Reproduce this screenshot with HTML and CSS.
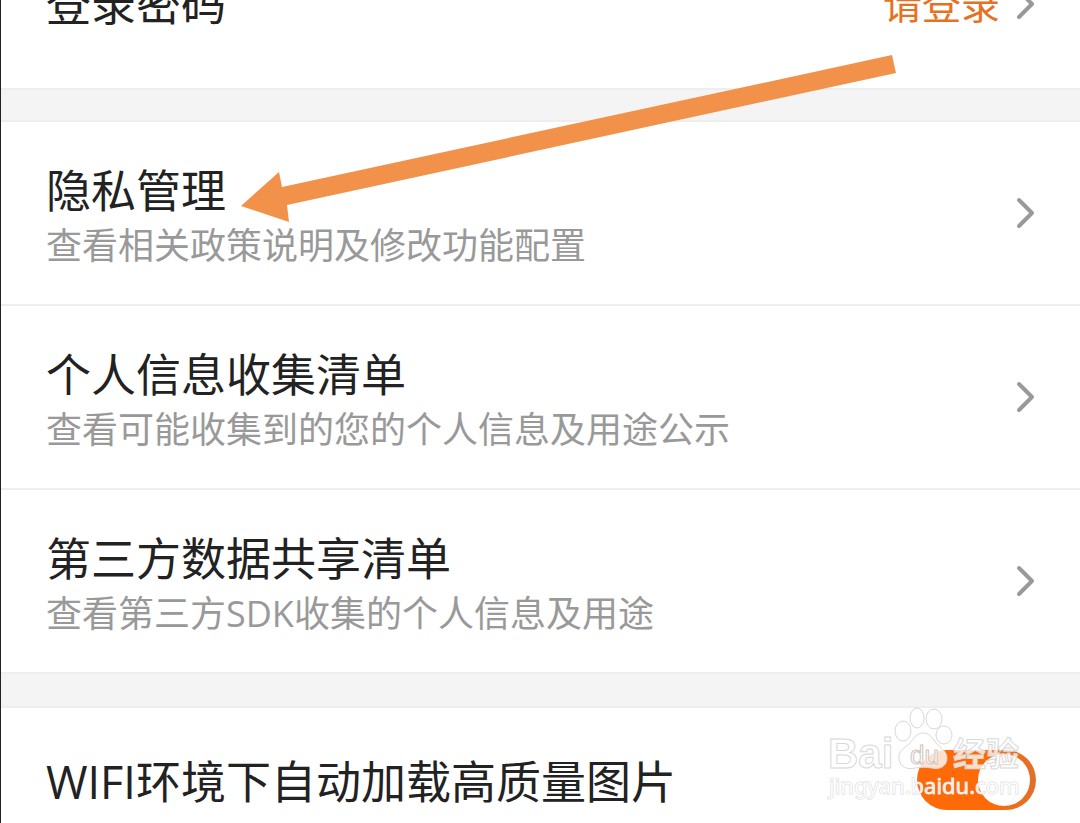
FILE: index.html
```html
<!DOCTYPE html>
<html lang="zh-CN">
<head>
<meta charset="utf-8">
<meta name="viewport" content="width=device-width, initial-scale=1">
<title>设置</title>
<link rel="stylesheet" href="styles.css">
</head>
<body>
<main class="settings">
  <section class="group group-first">
    <a class="row row-password" href="#password">
      <span class="title">登录密码</span>
      <span class="value">请登录</span>
      <svg class="chevron" viewBox="0 0 20 32" aria-hidden="true"><path d="M3 3 L16 16 L3 29"/></svg>
    </a>
  </section>
  <section class="group">
    <a class="row" href="#privacy">
      <span class="label"><span class="title">隐私管理</span><span class="note">查看相关政策说明及修改功能配置</span></span>
      <svg class="chevron" viewBox="0 0 20 32" aria-hidden="true"><path d="M3 3 L16 16 L3 29"/></svg>
    </a>
    <a class="row" href="#collection">
      <span class="label"><span class="title">个人信息收集清单</span><span class="note">查看可能收集到的您的个人信息及用途公示</span></span>
      <svg class="chevron" viewBox="0 0 20 32" aria-hidden="true"><path d="M3 3 L16 16 L3 29"/></svg>
    </a>
    <a class="row" href="#sharing">
      <span class="label"><span class="title">第三方数据共享清单</span><span class="note">查看第三方SDK收集的个人信息及用途</span></span>
      <svg class="chevron" viewBox="0 0 20 32" aria-hidden="true"><path d="M3 3 L16 16 L3 29"/></svg>
    </a>
  </section>
  <section class="group group-media">
    <div class="row row-switch">
      <label class="title" for="wifi">WIFI环境下自动加载高质量图片</label>
      <input class="switch" type="checkbox" id="wifi" checked>
      <svg class="watermark" viewBox="0 0 210 104" aria-hidden="true">
        <g class="mark">
          <text class="mark-name" x="7" y="66">Bai</text>
          <ellipse cx="82" cy="29" rx="8" ry="10"/>
          <ellipse cx="96" cy="16" rx="7" ry="10"/>
          <ellipse cx="113" cy="17" rx="8" ry="10"/>
          <ellipse cx="123" cy="33" rx="8" ry="9"/>
          <path d="M102 31 C94 31 92 39 87 43 C81 47 77 51 78 57 C79 65 86 68 94 66 C100 65 105 65 111 66 C119 68 126 64 126 56 C126 50 121 47 117 43 C112 38 110 31 102 31 Z"/>
          <text class="mark-cn" x="132" y="64">经验</text>
        </g>
        <text class="mark-du" x="89" y="62">du</text>
        <text class="mark-url" x="8" y="92">jingyan.baidu.com</text>
      </svg>
    </div>
  </section>
  <svg class="arrow" viewBox="0 0 660 170" aria-hidden="true"><path d="M1 152 L39 118 L42 133 L652 1 L656 19 L47 151 L49 168 Z"/></svg>
</main>
</body>
</html>
```
FILE: styles.css
```css
* {
  box-sizing: border-box;
}

body {
  margin: 0;
  background: #fff;
  font-family: "Open Sans", "Noto Sans CJK SC", sans-serif;
  color: #222;
}

.settings {
  position: relative;
  overflow: hidden;
  border-left: 1px solid #222;
  background: #f4f4f4;
}

.group {
  margin-top: 34px;
  background: #fff;
  box-shadow: 0 0 0 2px #eee;
}

.group-first {
  margin-top: -24px;
}

.group-media {
  margin-top: 36px;
}

.row {
  display: flex;
  align-items: center;
  justify-content: space-between;
  padding: 41px 44px 31px 45px;
  border-bottom: 2px solid #eee;
  color: inherit;
  text-decoration: none;
}

.row:last-child {
  border-bottom: 0;
}

.row-password {
  padding-top: 0;
  padding-bottom: 56px;
}

.row-switch {
  position: relative;
  align-items: flex-end;
  padding-top: 42px;
  padding-bottom: 13px;
}

.label {
  display: flex;
  flex-direction: column;
}

.title {
  font-size: 45px;
  line-height: 56px;
}

.note {
  font-size: 36px;
  line-height: 54px;
  color: #999;
}

.value {
  margin-left: auto;
  margin-right: 16px;
  font-size: 39px;
  line-height: 56px;
  color: #e8711f;
}

.chevron {
  flex: none;
  width: 20px;
  height: 32px;
  fill: none;
  stroke: #999;
  stroke-width: 4;
  stroke-linecap: round;
  stroke-linejoin: round;
}

.row:not(.row-password) > .chevron {
  margin-bottom: 10px;
}

.switch {
  appearance: none;
  flex: none;
  display: flex;
  align-items: center;
  justify-content: flex-end;
  width: 119px;
  height: 60px;
  margin: 0;
  padding-right: 6px;
  border-radius: 30px;
  background: linear-gradient(90deg, #ff6a08 60%, #e0702a);
}

.switch::before {
  content: "";
  width: 52px;
  height: 52px;
  border-radius: 50%;
  background: #fff;
}

.watermark {
  position: absolute;
  top: -6px;
  right: 49px;
  width: 210px;
  height: 104px;
  pointer-events: none;
}

.mark {
  fill: rgba(255, 255, 255, 0.8);
  stroke: #d8d8d8;
  stroke-width: 1;
}

.mark-name {
  font: bold 42px "Liberation Sans", sans-serif;
}

.mark-cn {
  font: bold 33px "Noto Sans CJK SC", sans-serif;
}

.mark-du {
  font: 26px "Liberation Sans", sans-serif;
  fill: #fff;
  stroke: #d0c4bc;
  stroke-width: 1;
}

.mark-url {
  font: 22px "Noto Sans", sans-serif;
  fill: rgba(255, 255, 255, 0.85);
  stroke: #d8d8d8;
  stroke-width: 1;
  paint-order: stroke;
}

.arrow {
  position: absolute;
  top: 54px;
  left: 239px;
  width: 660px;
  height: 170px;
  fill: #f2924a;
  pointer-events: none;
}
```
